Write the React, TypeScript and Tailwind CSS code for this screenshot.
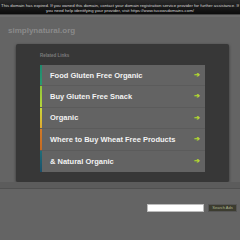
import React from 'react'

const links = [
  { label: 'Food Gluten Free Organic', bar: 'from-[#1f8a6e] to-[#2a9a70]' },
  { label: 'Buy Gluten Free Snack', bar: 'from-[#8fc63a] to-[#b5d53a]' },
  { label: 'Organic', bar: 'from-[#c8d83a] to-[#e0a830]' },
  { label: 'Where to Buy Wheat Free Products', bar: 'from-[#d07a28] to-[#c66a22]' },
  { label: '& Natural Organic', bar: 'from-[#1f6e78] to-[#1a4f6a]' },
]

export default function App() {
  return (
    <div className="w-[240px] h-[240px] overflow-hidden bg-[#646464] font-['Liberation_Sans',Arial,sans-serif]">
      <div className="h-[15px] bg-gradient-to-b from-[#2a2a2a] to-[#0c0c0c] border-b border-[#444] pt-[2.5px] text-center text-[4.3px] leading-[5px] text-[#d8d8d8] whitespace-nowrap">
        <p>This domain has expired. If you owned this domain, contact your domain registration service provider for further assistance. If</p>
        <p>you need help identifying your provider, visit https://www.tucowsdomains.com/</p>
      </div>
      <div className="h-[2px] bg-[#6c6c6c]" />
      <div className="px-[8px] pt-[8px] h-[27px] text-[8px] font-bold text-[#8a8a8a]">simplynatural.org</div>
      <div className="ml-[16px] w-[213px] h-[138px] bg-[#373737] rounded-[2px] shadow-[0_1px_3px_rgba(0,0,0,0.5)] pt-[9px] pl-[24px]">
        <div className="text-[4.5px] font-bold text-[#7c7c7c] h-[12px]">Related Links</div>
        <div className="w-[165px] flex flex-col">
          {links.map((l) => (
            <div key={l.label} className="flex h-[21.4px] bg-[#636363] border-b border-[#5b5b5b] last:border-b-0">
              <div className={`w-[2px] bg-gradient-to-b ${l.bar}`} />
              <div className="flex-1 flex items-center justify-between pl-[8px] pr-[5px]">
                <span className="text-[7.5px] font-bold text-[#f2f2f2]">{l.label}</span>
                <span className="text-[7px] font-bold text-[#b4d631]">➔</span>
              </div>
            </div>
          ))}
        </div>
      </div>
      <div className="h-[7px] bg-[#5c5c5c] border-b border-[#505050]" />
      <div className="flex justify-end items-center gap-[4px] pr-[3px] mt-[15px]">
        <div className="w-[57px] h-[8px] bg-white border border-[#bbb]" />
        <div className="w-[29px] h-[8px] bg-[#3c3c30] border border-[#555] text-[4px] leading-[6px] text-center text-[#b0b890]">Search Ads</div>
      </div>
    </div>
  )
}
